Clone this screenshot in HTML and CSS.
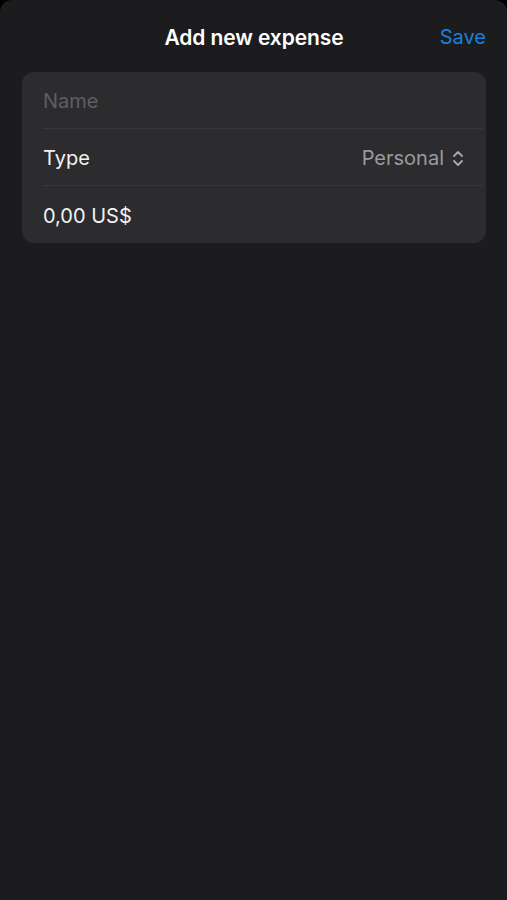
FILE: index.html
```html
<!DOCTYPE html>
<html lang="en">
  <head>
    <meta charset="UTF-8" />
    <title>Add new expense</title>
    <link rel="stylesheet" href="styles.css">
  </head>
  <body>
    <div class="sheet">
      <header class="navbar">
        <h1 class="title">Add new expense</h1>
        <button class="save" type="button">Save</button>
      </header>

      <form class="group">
        <div class="row">
          <input class="field" type="text" placeholder="Name" />
        </div>
        <div class="row">
          <span class="label">Type</span>
          <span class="picker">
            Personal
            <svg class="chevrons" width="12" height="17" viewBox="0 0 12 17" fill="none" stroke="currentColor" stroke-width="1.8" stroke-linecap="round" stroke-linejoin="round">
              <path d="M2 6 L6 2 L10 6" />
              <path d="M2 11 L6 15 L10 11" />
            </svg>
          </span>
        </div>
        <div class="row">
          <span class="label">0,00 US$</span>
        </div>
      </form>
    </div>
  </body>
</html>
```

FILE: styles.css
```css
html,
body {
  margin: 0;
  height: 100%;
  background: #000;
}
body {
  font-family: Inter, "Noto Sans", sans-serif;
  color: #fff;
}
.sheet {
  min-height: 100%;
  background: #1c1c1e;
  border-radius: 12px 12px 0 0;
  padding: 0 21px 0 22px;
  box-sizing: border-box;
}
.navbar {
  position: relative;
  height: 72px;
  display: flex;
  align-items: center;
  justify-content: center;
}
.title {
  margin: 0;
  margin-top: 2px;
  font-size: 21px;
  font-weight: 600;
  letter-spacing: -0.1px;
}
.save {
  position: absolute;
  right: 0;
  top: 25px;
  padding: 0;
  background: none;
  border: none;
  color: #1a80dc;
  font-family: inherit;
  font-size: 20px;
  cursor: pointer;
}
.group {
  margin: 0;
  background: #2c2c2e;
  border-radius: 12px;
  padding-left: 21px;
}
.row {
  box-sizing: border-box;
  height: 57px;
  display: flex;
  align-items: center;
  justify-content: space-between;
  padding: 2px 19px 0 0;
  border-bottom: 1px solid #38383a;
  margin-right: 3px;
  font-size: 20px;
}
.row:last-child {
  border-bottom: none;
}
.field {
  width: 100%;
  padding: 0;
  background: none;
  border: none;
  outline: none;
  color: #fff;
  font-family: inherit;
  font-size: 20px;
}
.field::placeholder {
  color: #5e5e62;
}
.label {
  color: #f2f2f2;
}
.picker {
  display: flex;
  align-items: center;
  gap: 8px;
  color: #9a9a9f;
}
.chevrons {
  color: #a8a8ad;
}
```
